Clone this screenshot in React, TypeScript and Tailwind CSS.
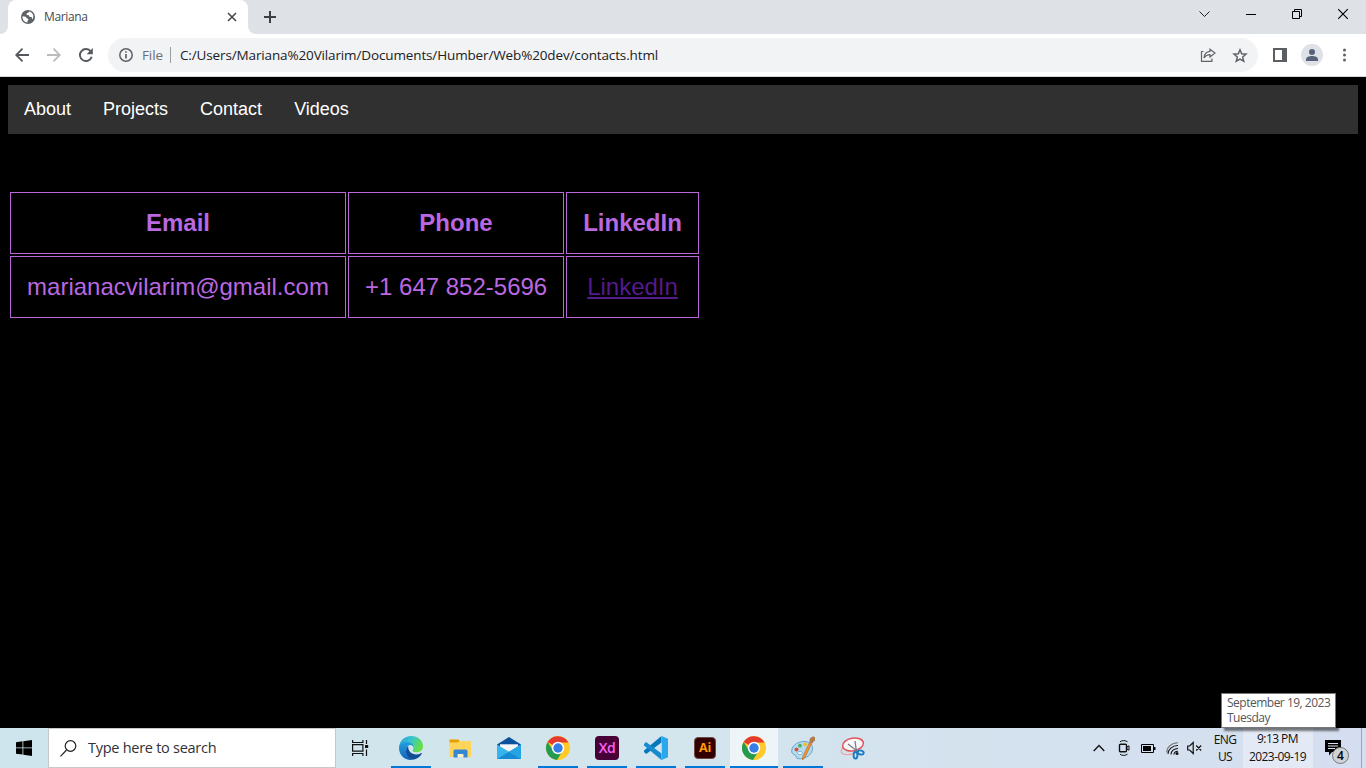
import type { ReactNode } from "react";

const UI = "font-['Open_Sans','Noto_Sans',sans-serif]";

function Globe() {
  return (
    <svg width="14" height="14" viewBox="0 0 14 14">
      <circle cx="7" cy="7" r="7" fill="#5f6368" />
      <path d="M1.5 6.2 4.7 6.8 5.9 8.3 7.6 9.3 6.6 10.7 6.5 12.5C3.2 12.2 1.2 9.4 1.5 6.2ZM8.2 1.6 7.2 2.8 5.6 3.3 5.8 4.9 7.8 5.2 8.7 6.9 10.6 7 11.3 9.6C13.5 6.5 12.1 2.6 8.2 1.6Z" fill="#fff" />
    </svg>
  );
}

function TabStrip() {
  return (
    <div className="flex h-[34px] bg-[#dee1e6]">
      <div className="w-2 bg-white"><div className="h-full w-full rounded-br-lg bg-[#dee1e6]" /></div>
      <div className="flex w-60 items-center rounded-t-lg bg-white pl-[13px] pr-[11px]">
        <Globe />
        <span className="ml-[9px] flex-1 text-[12px] leading-4 tracking-[-0.35px] text-[#45494d]">Mariana</span>
        <svg width="10" height="10" viewBox="0 0 10 10" stroke="#45484c" strokeWidth="1.6"><path d="M1 1l8 8M9 1 1 9" /></svg>
      </div>
      <div className="w-2 bg-white"><div className="h-full w-full rounded-bl-lg bg-[#dee1e6]" /></div>
      <div className="flex w-7 items-center justify-center">
        <svg width="12" height="12" viewBox="0 0 12 12" stroke="#3c4043" strokeWidth="2"><path d="M6 0v12M0 6h12" /></svg>
      </div>
      <div className="flex-1" />
      <div className="mt-[8px] flex h-3 w-[184px]">
        <div className="w-[46px] pl-[17px]"><svg width="11" height="12" viewBox="0 0 11 12" fill="none" stroke="#222"><path d="m.5 3.500 5 5 5-5" /></svg></div>
        <div className="w-[46px] pl-[18px]"><svg width="10" height="12" viewBox="0 0 10 12" stroke="#000"><path d="M0 6.500h10" /></svg></div>
        <div className="w-[46px] pl-[18px]"><svg width="11" height="12" viewBox="0 0 11 12" fill="none" stroke="#000"><path d="M.5 3.500h7v7h-7zM2.500 3V1.500h7v7H8" /></svg></div>
        <div className="w-[46px] pl-[18px]"><svg width="11" height="12" viewBox="0 0 11 12" stroke="#000" strokeWidth="1.1"><path d="m.2 1.200 9.600 9.600M9.800 1.200.2 10.800" /></svg></div>
      </div>
    </div>
  );
}

function Toolbar() {
  return (
    <div className="flex h-[43px] items-center border-b border-[#d3d5d9] bg-white">
      <div className="flex w-[108px] gap-[18px] pl-[15px]">
        <svg width="14" height="14" viewBox="0 0 14 14" fill="none" stroke="#55585d" strokeWidth="1.8"><path d="M14 7H1.500M7.500.7 1.200 7l6.300 6.300" /></svg>
        <svg width="14" height="14" viewBox="0 0 14 14" fill="none" stroke="#babcbe" strokeWidth="1.8"><path d="M0 7h12.500M6.500.7 12.800 7l-6.300 6.300" /></svg>
        <svg width="14" height="14" viewBox="0 0 14 14" fill="none" stroke="#55585d" strokeWidth="1.9"><path d="M11.800 3.500A6 6 0 1 0 12.700 8.800" /><path d="M13.800 0v6.200H7.600z" fill="#55585d" stroke="none" /></svg>
      </div>
      <div className="flex h-[34px] w-[1150px] items-center rounded-full bg-[#f1f3f4] pl-[11px] pr-[10px]">
        <svg width="14" height="14" viewBox="0 0 14 14" fill="none" stroke="#5f6368" strokeWidth="1.5"><circle cx="7" cy="7" r="6.200" /><path d="M7 6v4.500M7 3.200v1.600" strokeWidth="1.7" /></svg>
        <span className="ml-[9px] w-[28px] whitespace-nowrap text-[13.5px] tracking-[-0.1px] text-[#6b6f75]">File</span>
        <div className="h-4 w-px bg-[#9a9da1]" />
        <span className="ml-[9px] flex-1 whitespace-nowrap text-[13.5px] tracking-[-0.135px] text-[#202124]">C:/Users/Mariana%20Vilarim/Documents/Humber/Web%20dev/contacts.html</span>
        <svg width="16" height="16" viewBox="0 0 16 16" fill="none" stroke="#5f6368" strokeWidth="1.2"><path d="M3.500 4.500h-2v9.900h10.400V11.500" /><path d="M10 2.200 15 6l-5 4V7.700c-3 0-4.500 1-6 3.300.3-4 2.700-6.300 6-6.600z" /></svg>
        <svg className="ml-4" width="16" height="15" viewBox="0 0 16 15" fill="none" stroke="#5f6368" strokeWidth="1.5"><path d="m8 1.800 1.700 4 4.300.4-3.300 2.800 1 4.200L8 11l-3.700 2.200 1-4.200L2 6.200l4.300-.4z" /></svg>
      </div>
      <svg className="ml-[15px]" width="14" height="14" viewBox="0 0 14 14"><path d="M0 0h14v14H0zM2 2v10h7V2z" fill="#5b5e63" fillRule="evenodd" /></svg>
      <svg className="ml-[14px]" width="22" height="22" viewBox="0 0 22 22"><circle cx="11" cy="11" r="11" fill="#dee1e6" /><circle cx="11" cy="8" r="3" fill="#58637a" /><path d="M5 17v-1.500C5 13 8 12 11 12s6 1 6 3.500V17z" fill="#58637a" /></svg>
      <svg className="ml-[19px]" width="4" height="14" viewBox="0 0 4 14" fill="#5f6368"><circle cx="2.500" cy="2" r="1.500" /><circle cx="2.500" cy="7" r="1.500" /><circle cx="2.500" cy="12" r="1.500" /></svg>
    </div>
  );
}

function TaskItem({ children, running, active }: { children: ReactNode; running?: boolean; active?: boolean }) {
  return (
    <div className="flex w-[49px] pl-px">
      <div className={`flex h-10 w-12 flex-col items-center ${active ? "bg-[#eef5f8]" : ""}`}>
        <div className="flex h-[38px] items-center pt-[2px]">{children}</div>
        {running && <div className={`h-[2px] bg-[#0078d7] ${active ? "w-full" : "w-10"}`} />}
      </div>
    </div>
  );
}

function Chrome() {
  return (
    <svg width="24" height="24" viewBox="0 0 24 24">
      <circle cx="12" cy="12" r="12" fill="#ffca28" />
      <path d="M12 12 1.600 6A12 12 0 0 1 22.400 6.500H12z" fill="#e33b2e" />
      <path d="M1.600 6A12 12 0 0 0 11 24l5.700-9.300L7.200 14.700z" fill="#239b50" />
      <circle cx="12" cy="12" r="6.200" fill="#fff" />
      <circle cx="12" cy="12" r="4.700" fill="#357ee8" />
    </svg>
  );
}

function Edge() {
  return (
    <svg width="24" height="24" viewBox="0 0 24 24">
      <defs>
        <linearGradient id="edgeTop" x1="0" y1="0" x2="1" y2="0.4"><stop offset="0" stopColor="#279bd8" /><stop offset=".5" stopColor="#36c4cf" /><stop offset="1" stopColor="#66df48" /></linearGradient>
        <linearGradient id="edgeLow" x1="0" y1="0" x2="0" y2="1"><stop offset="0" stopColor="#239fe0" /><stop offset="1" stopColor="#1262b7" /></linearGradient>
      </defs>
      <path d="M0 11.500C.3 5 5.500 0 12 0c7 0 12 4.800 12 10 0 4-3 6.300-6.500 6.300-3 0-4.300-1-3.800-2 1.500-2.200.6-5.600-3.400-6.200C6 7.500 1.500 8.500 0 11.500z" fill="url(#edgeTop)" />
      <path d="M0 12C.5 8 3.600 6 7.500 6c4.200 0 7 2.200 7.200 5-1-1.500-3-2.500-5-1.500-4 2.200-3.200 11 4.200 14.300C6 25 .1 19.500 0 12z" fill="url(#edgeLow)" />
      <path d="M9.200 10C5 13.500 7 22 14 23.800c3.800-.6 7-2.800 8.800-6 .3-.6-.2-.9-.7-.6-6 3-13.300.3-12.900-7.200z" fill="#124d96" />
    </svg>
  );
}

function Explorer() {
  return (
    <svg width="22" height="19" viewBox="0 0 22 19">
      <path d="M.5 1.500Q.5.500 1.500.500H8l2 1.500h11q1 0 1 1V18H.5z" fill="#ffd45a" />
      <path d="M.5 3.500v-2q0-1 1-1h8l1 1.500-1.500 1.500z" fill="#e3a008" />
      <path d="M8.500 14h6v4h-6z" fill="#fcefc0" />
      <path d="M4.500 18.500V12q0-1.500 1.500-1.500h11q1.500 0 1.500 1.500v6.500h-4V15h-6v3.500z" fill="#3488d3" />
    </svg>
  );
}

function Mail() {
  return (
    <svg width="24" height="22" viewBox="0 0 24 22">
      <path d="M0 7.500 12 0l12 7.500V14H0z" fill="#0b529d" /><path d="M3 7.300h18v7H3z" fill="#f5f7f8" />
      <path d="m0 7.500 12 7.200 12-7.200V22H0z" fill="#35b5ee" /><path d="m0 22 12-7.300L24 22z" fill="#168bd3" /><path d="M24 7.500V22L12 14.700z" fill="#26a3e2" />
    </svg>
  );
}

function Code() {
  return (
    <svg width="24" height="24" viewBox="0 0 24 24">
      <path d="M17.500 0v6.500L2.200 18 0 16v-1.400z" fill="#0878bd" /><path d="m0 8 2-1.900 15.500 11.500V24L0 9.400z" fill="#168bd2" />
      <path d="M17.500 0 24 2.800v18.400L17.500 24l-1-1 1.300-.8V1.700z" fill="#2ba8ed" />
    </svg>
  );
}

function Paint() {
  return (
    <svg width="24" height="24" viewBox="0 0 24 24">
      <path d="M.7 15C.7 9 8 5 14 5.500c7 .6 8.500 5.500 7 9.500-2 5.500-8 8.300-13.500 7.700-3-.3-1.500-3-4-4C1.500 18 .7 17 .7 15z" fill="#b3daef" stroke="#5a9fc8" strokeWidth=".9" />
      <circle cx="5.500" cy="13.500" r="2" fill="#dc4f40" /><circle cx="9" cy="9.700" r="1.900" fill="#4eae5b" /><circle cx="14.200" cy="8.300" r="1.900" fill="#f3b93e" /><ellipse cx="9" cy="17" rx="2.500" ry="1.600" fill="#eef6fa" stroke="#6aa8cc" strokeWidth=".7" />
      <path d="m18.500 6.500 2.200 1L14 21.500 11.500 24l.2-3.500z" fill="#ec9535" stroke="#a75d1e" strokeWidth=".5" /><path d="m18.300 6.500.5-4L22 .3l2.300 1.200-.3 2.700-3.200 3.500z" fill="#b07d50" />
    </svg>
  );
}

function Snip() {
  return (
    <svg width="25" height="24" viewBox="0 0 25 24" fill="none">
      <path d="M4 11c-4 3-4 7 1.500 7.500 5 .4 9-1 12-3.500" stroke="#efa0a6" strokeWidth="1.2" />
      <ellipse cx="13" cy="8.500" rx="10.500" ry="6.300" transform="rotate(-10 13 8.500)" fill="#f8f8f8" stroke="#e1545b" strokeWidth="1.5" />
      <path d="m8 8 9 7M15 5l1.500 11" stroke="#777e86" strokeWidth="1.3" />
      <ellipse cx="15.500" cy="19.300" rx="1.900" ry="3.300" stroke="#187ac0" strokeWidth="1.900" /><ellipse cx="20.700" cy="16.500" rx="3" ry="2" transform="rotate(15 20.700 16.500)" stroke="#187ac0" strokeWidth="1.900" />
    </svg>
  );
}

function Tray() {
  return (
    <>
      <svg width="12" height="8" viewBox="0 0 12 8" fill="none" stroke="#111" strokeWidth="1.3"><path d="m.7 7 5.300-5.500L11.300 7" /></svg>
      <svg className="ml-[13px]" width="12" height="16" viewBox="0 0 12 16" fill="none" stroke="#111"><path d="M2 1.800C4 .2 7.500.2 9.500 1.800M2 14.200c2 1.600 5.500 1.600 7.500 0" /><rect x="1.500" y="4.200" width="7" height="7.600" rx="1" strokeWidth="1.400" /><path d="m8.800 7 2.200-1.200v4.400L8.800 9z" /></svg>
      <svg className="ml-[11px]" width="15" height="9" viewBox="0 0 15 9"><path d="M.5.500h12v8H.5z" fill="none" stroke="#000" /><path d="M2 2h8v5H2zM13 3h1.500v3H13z" fill="#000" /></svg>
      <svg className="ml-[10px]" width="13" height="13" viewBox="0 0 13 13" fill="none" stroke="#111" strokeWidth="1.1"><path d="M.7 10.500C.7 5 5.500.8 12 .8" stroke="#777" /><path d="M2 12C2 7.500 6 3.500 12 3.500M5 12.500c0-3.500 3-6 7-6M8 12.500c0-2 1.700-3.300 4-3.300" /><circle cx="11" cy="11.500" r="1.500" fill="#111" stroke="none" /></svg>
      <svg className="ml-[8px]" width="16" height="14" viewBox="0 0 16 14" fill="none" stroke="#111" strokeWidth="1.2"><path d="M.7 5h2l3.500-3.500v11L2.700 9h-2zM9.200 4.500l5 5M14.200 4.500l-5 5" /></svg>
    </>
  );
}

function Taskbar() {
  return (
    <div className="flex h-10 bg-linear-to-r from-[#cee5ed] via-[#d3e5ed] to-[#d5def0]">
      <div className="flex w-12 items-center pl-4">
        <svg width="16" height="16" viewBox="0 0 16 16"><path d="m0 2.200 6.500-.9v6.200H0zm7.300-1L16 0v7.500H7.300zM0 8.300h6.500v6.200L0 13.700zm7.300 0H16V16l-8.700-1.300z" /></svg>
      </div>
      <div className="flex w-72 items-center border border-[#c3c8ca] bg-white pl-[11px]">
        <svg width="17" height="17" viewBox="0 0 17 17" fill="none" stroke="#222" strokeWidth="1.2"><circle cx="10.500" cy="6" r="5.300" /><path d="m6.500 10-6 6.300" /></svg>
        <span className="ml-[11px] text-[14.5px] leading-5 tracking-[-0.27px] text-[#303236]">Type here to search</span>
      </div>
      <div className="flex w-[50px] items-center pl-4">
        <svg width="17" height="16" viewBox="0 0 17 16" fill="none" stroke="#111" strokeWidth="1.2"><path d="M.6 0v2.500h10.300V0M.6 16v-2.500h10.300V16M.6 4.700h10.300v6.500H.6zM14.500 0v4M14.500 9.500V16" /><path d="M13 5h3.200v3H13z" fill="#111" stroke="none" /></svg>
      </div>
      <TaskItem running><Edge /></TaskItem>
      <TaskItem><Explorer /></TaskItem>
      <TaskItem><Mail /></TaskItem>
      <TaskItem running><Chrome /></TaskItem>
      <TaskItem running>
        <div className="flex size-6 items-center justify-center rounded-[4px] bg-[#470137] text-[14px] font-semibold leading-none tracking-[-0.4px] text-[#ff61f6]">Xd</div>
      </TaskItem>
      <TaskItem running><Code /></TaskItem>
      <TaskItem running>
        <div className="flex size-[22px] items-center justify-center rounded-[4px] border border-[#6f4a43] bg-[#330000] text-[12.5px] font-bold leading-none tracking-[-0.2px] text-[#ff9a00]">Ai</div>
      </TaskItem>
      <TaskItem running active><Chrome /></TaskItem>
      <TaskItem running><Paint /></TaskItem>
      <TaskItem><Snip /></TaskItem>
      <div className="flex flex-1 items-center pl-[217px]"><Tray /></div>
      <div className="flex w-9 flex-col items-center pt-[3px] text-[12px] leading-[17px] tracking-[-0.6px] text-[#111]"><span>ENG</span><span>US</span></div>
      <div className="relative flex w-[70px] flex-col items-center bg-[#e4eaf5] pr-px pt-[2px] text-[12px] leading-[18px] tracking-[-0.55px] text-[#111]">
        <span>9:13 PM</span><span>2023-09-19</span>
        <div className="absolute -left-[22px] -top-[35px] h-[35px] w-[115px] whitespace-nowrap border border-[#777] bg-white pl-[5px] pt-px text-[12px] leading-[15px] tracking-[-0.5px] text-[#575757] shadow-[3px_3px_2px_#00000080]">September 19, 2023<br />Tuesday</div>
      </div>
      <div className="relative w-12 pl-[12px] pt-[12px]">
        <svg width="16" height="16" viewBox="0 0 16 16"><path d="M0 0h16v12H7l-3 3.500V12H0z" fill="#000" /><path d="M3 3.500h10M3 6h10M3 8.500h7" stroke="#dce3f0" /></svg>
        <div className="absolute left-[19px] top-[19px] flex size-[17px] items-center justify-center rounded-full border border-[#777] bg-[#cfd2d6] text-[12px] font-semibold leading-none text-black">4</div>
      </div>
      <div className="w-[5px] border-l border-[#9ca6b2]" />
    </div>
  );
}

const cell = "border border-[#ba68d9] px-4 py-4 leading-7 whitespace-nowrap";

export default function App() {
  return (
    <div className={`flex h-[768px] w-[1366px] flex-col overflow-hidden bg-black ${UI}`}>
      <TabStrip />
      <Toolbar />
      <main className="flex-1 px-2 pt-2 font-['Liberation_Sans',Arial,sans-serif]">
        <nav className="flex h-[49px] bg-[#303030] text-[18px] leading-[48px] text-white">
          {["About", "Projects", "Contact", "Videos"].map((label) => <a key={label} href="#" className="px-4">{label}</a>)}
        </nav>
        <table className="mt-14 w-[693px] table-fixed border-separate border-spacing-[2px] text-center text-[24px] text-[#ba68e0]">
          <thead><tr><th className={`w-[336px] ${cell}`}>Email</th><th className={`w-[216px] ${cell}`}>Phone</th><th className={`w-[133px] ${cell}`}>LinkedIn</th></tr></thead>
          <tbody><tr><td className={cell}>marianacvilarim@gmail.com</td><td className={cell}>+1 647 852-5696</td><td className={cell}><a href="#" className="text-[#551a8b] underline">LinkedIn</a></td></tr></tbody>
        </table>
      </main>
      <Taskbar />
    </div>
  );
}
